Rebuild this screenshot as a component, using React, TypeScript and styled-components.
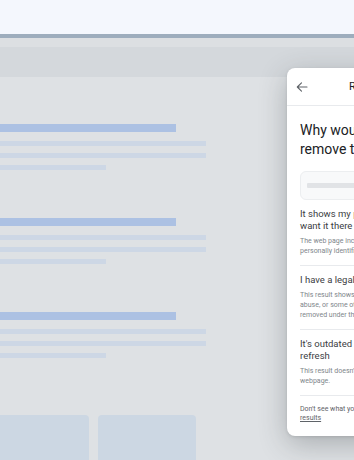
import styled, { createGlobalStyle } from "styled-components";

const GlobalStyle = createGlobalStyle`
  html, body {
    margin: 0;
    padding: 0;
    overflow: hidden;
    background: #dee1e4;
    font-family: Roboto, "Open Sans", Arial, sans-serif;
  }
`;

interface Option {
  title: string[];
  desc: string[];
}

const options: Option[] = [
  {
    title: ["It shows my personal info and I don't", "want it there"],
    desc: ["The web page includes your contact info or", "personally identifiable info"],
  },
  {
    title: ["I have a legal removal request"],
    desc: [
      "This result shows content like copyright",
      "abuse, or some other content that should be",
      "removed under the law",
    ],
  },
  {
    title: ["It's outdated and I want Google to", "refresh"],
    desc: ["This result doesn't match the current", "webpage."],
  },
];

const App = () => {
  return (
    <Page>
      <GlobalStyle />
      <TopBar />
      <BrowserBand />
      <TabBand />
      <Content>
        {[0, 1, 2].map((i) => (
          <Snippet key={i}>
            <SnippetTitle />
            <SnippetLine $width={206} />
            <SnippetLine $width={206} />
            <SnippetLine $width={106} />
          </Snippet>
        ))}
        <Cards>
          <Tile />
          <Tile />
        </Cards>
      </Content>

      <Panel>
        <PanelHeader>
          <svg width="12" height="12" viewBox="0 0 12 12" fill="none">
            <path
              d="M11 6H1.5M5.5 1.8L1.3 6l4.2 4.2"
              stroke="#5f6368"
              strokeWidth="1.1"
              strokeLinecap="round"
              strokeLinejoin="round"
            />
          </svg>
          <HeaderTitle>Remove result</HeaderTitle>
        </PanelHeader>
        <PanelBody>
          <Heading>
            Why would you like to
            <br />
            remove this result?
          </Heading>
          <UrlBox>
            <UrlBar />
          </UrlBox>
          {options.map((o, i) => (
            <OptionRow key={i}>
              <OptionTitle>
                {o.title.map((t, j) => (
                  <div key={j}>{t}</div>
                ))}
              </OptionTitle>
              <OptionDesc>
                {o.desc.map((t, j) => (
                  <div key={j}>{t}</div>
                ))}
              </OptionDesc>
            </OptionRow>
          ))}
          <Footer>
            Don't see what you're looking for? Report other
            <br />
            <FooterLink>results</FooterLink>
          </Footer>
        </PanelBody>
      </Panel>
    </Page>
  );
};

const Page = styled.div`
  position: relative;
  width: 354px;
  height: 460px;
  overflow: hidden;
  background: #dee1e4;
`;

const TopBar = styled.div`
  height: 34px;
  background: #f4f7fd;
  border-bottom: 4px solid #9dadbd;
`;

const BrowserBand = styled.div`
  height: 9px;
  background: #dcdfe2;
`;

const TabBand = styled.div`
  height: 30px;
  background: #d4d8dc;
`;

const Content = styled.div`
  display: flex;
  flex-direction: column;
  padding-top: 47px;
  gap: 48px;
`;

const Snippet = styled.div`
  display: flex;
  flex-direction: column;
  gap: 7px;
`;

const SnippetTitle = styled.div`
  width: 176px;
  height: 8px;
  background: #acc1e3;
  margin-bottom: 2px;
`;

const SnippetLine = styled.div<{ $width: number }>`
  width: ${({ $width }) => $width}px;
  height: 5px;
  background: #cdd7e5;
`;

const Cards = styled.div`
  display: flex;
  gap: 9px;
  margin-top: 9px;
`;

const Tile = styled.div`
  width: 89px;
  height: 60px;
  background: #ccd7e3;
  border-radius: 0 4px 0 0;

  & + & {
    width: 98px;
    border-radius: 4px 4px 0 0;
  }
`;

const Panel = styled.div`
  position: absolute;
  left: 287px;
  top: 68px;
  width: 250px;
  background: #ffffff;
  border-radius: 8px;
  box-shadow: 0 8px 28px rgba(60, 64, 67, 0.32), 0 1px 3px rgba(60, 64, 67, 0.15);
`;

const PanelHeader = styled.div`
  display: flex;
  align-items: center;
  padding-left: 9px;
  border-bottom: 1px solid #e8eaed;
  box-sizing: border-box;
  height: 38px;
`;

const HeaderTitle = styled.span`
  margin-left: 41px;
  font-size: 11px;
  color: #202124;
`;

const PanelBody = styled.div`
  padding: 0 13px 13px;
`;

const Heading = styled.div`
  margin-top: 15px;
  font-size: 14px;
  line-height: 19px;
  color: #202124;
  white-space: nowrap;
`;

const UrlBox = styled.div`
  margin-top: 12px;
  height: 29px;
  box-sizing: border-box;
  border: 1px solid #eceef0;
  background: #f8f9fa;
  border-radius: 6px;
  display: flex;
  align-items: center;
  padding-left: 6px;
`;

const UrlBar = styled.div`
  width: 180px;
  height: 5px;
  background: #e1e3e6;
  border-radius: 1px;
`;

const OptionRow = styled.div`
  padding: 8px 0 9px;
  border-bottom: 1px solid #e8eaed;
  white-space: nowrap;

  &:first-of-type {
    padding-top: 12px;
  }
`;

const OptionTitle = styled.div`
  font-size: 9.5px;
  line-height: 12px;
  color: #3c4043;
`;

const OptionDesc = styled.div`
  margin-top: 4px;
  font-size: 7px;
  line-height: 10px;
  color: #80868b;
`;

const Footer = styled.div`
  margin-top: 9px;
  font-size: 7px;
  line-height: 9px;
  color: #5f6368;
  white-space: nowrap;
`;

const FooterLink = styled.span`
  text-decoration: underline;
`;

export default App;
